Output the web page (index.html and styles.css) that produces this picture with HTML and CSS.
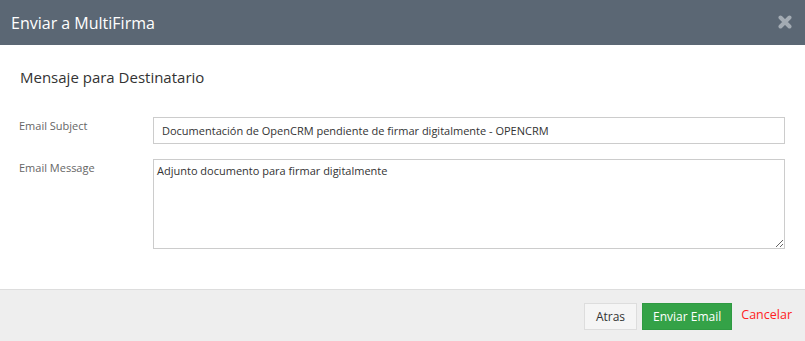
FILE: index.html
```html
<!DOCTYPE html>
<html lang="es">
<head>
    <meta charset="UTF-8">
    <meta name="viewport" content="width=device-width, initial-scale=1.0">
    <title>Enviar a MultiFirma</title>
    <link rel="stylesheet" href="styles.css">
</head>
<body>
    <div class="modal">
        <div class="modal-header">
            <h3>Enviar a MultiFirma</h3>
            <svg class="close" width="14" height="14" viewBox="0 0 14 14">
                <path d="M2.5 2.5 L11.5 11.5 M11.5 2.5 L2.5 11.5" stroke="#a3abb3" stroke-width="4" stroke-linecap="round"/>
            </svg>
        </div>

        <div class="modal-body">
            <h4>Mensaje para Destinatario</h4>

            <div class="form-row">
                <label for="subject">Email Subject</label>
                <input type="text" id="subject" value="Documentación de OpenCRM pendiente de firmar digitalmente - OPENCRM">
            </div>
            <div class="form-row">
                <label for="message">Email Message</label>
                <textarea id="message">Adjunto documento para firmar digitalmente</textarea>
            </div>
        </div>

        <div class="modal-footer">
            <button class="btn">Atras</button>
            <button class="btn btn-success">Enviar Email</button>
            <a href="#" class="cancel">Cancelar</a>
        </div>
    </div>
</body>
</html>
```

FILE: styles.css
```css
body {
    margin: 0;
    font-family: "Open Sans", Arial, sans-serif;
    background-color: #fff;
}
.modal {
    width: 805px;
    height: 341px;
    display: flex;
    flex-direction: column;
}
.modal-header {
    height: 45px;
    background-color: #5b6774;
    display: flex;
    align-items: center;
    justify-content: space-between;
    padding: 0 13px 0 11px;
}
.modal-header h3 {
    margin: 0;
    color: #fff;
    font-size: 16px;
    font-weight: normal;
}
.close {
    margin-top: -2px;
}
.modal-body {
    flex: 1;
    padding: 0 20px 0 19px;
}
.modal-body h4 {
    margin: 21px 0 0 1px;
    font-size: 15px;
    font-weight: normal;
    color: #333;
    height: 30px;
    line-height: 22px;
}
.form-row {
    display: flex;
    margin-top: 21px;
}
.form-row + .form-row {
    margin-top: 15px;
}
.form-row label {
    width: 134px;
    font-size: 11px;
    color: #666;
    padding-top: 1px;
}
.form-row input,
.form-row textarea {
    flex: 1;
    font-family: "Open Sans", Arial, sans-serif;
    font-size: 11px;
    color: #333;
    border: 1px solid #ccc;
    border-radius: 0;
    box-sizing: border-box;
    margin: 0;
}
.form-row input {
    height: 27px;
    padding: 0 8px;
}
.form-row textarea {
    height: 90px;
    padding: 3px 3px;
    resize: vertical;
}
.modal-footer {
    height: 52px;
    box-sizing: border-box;
    border-top: 1px solid #ddd;
    background-color: #eee;
    display: flex;
    justify-content: flex-end;
    align-items: flex-start;
    padding: 13px 13px 0 0;
}
.btn {
    height: 27px;
    padding: 0 11px;
    font-family: "Open Sans", Arial, sans-serif;
    font-size: 12px;
    color: #333;
    background-color: #f5f5f5;
    border: 1px solid #ddd;
    border-radius: 0;
    margin-right: 5px;
}
.btn-success {
    background-color: #34a247;
    border-color: #2f9a42;
    color: #fff;
    padding: 0 10px;
    margin-right: 9px;
}
.cancel {
    color: #f22;
    font-size: 12.5px;
    text-decoration: none;
    line-height: 24px;
}
```
